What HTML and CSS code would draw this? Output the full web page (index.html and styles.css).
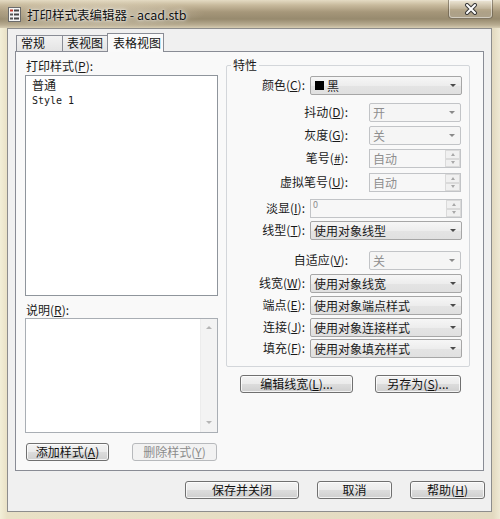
FILE: index.html
```html
<!DOCTYPE html>
<html lang="zh">
<head>
<meta charset="utf-8">
<title>打印样式表编辑器 - acad.stb</title>
<link rel="stylesheet" href="styles.css">
</head>
<body>
<div class="window">
  <div class="titlebar">
    <svg class="app-icon" width="13" height="15" viewBox="0 0 13 15">
      <rect x="0.5" y="0.5" width="12" height="14" fill="#f4f4f4" stroke="#6b6b6b"/>
      <rect x="2" y="2.5" width="3" height="2" fill="#c0392b"/>
      <rect x="6" y="2.5" width="5" height="2" fill="#444"/>
      <rect x="2" y="6.5" width="3" height="2" fill="#555"/>
      <rect x="6" y="6.5" width="5" height="2" fill="#444"/>
      <rect x="2" y="10.5" width="3" height="2" fill="#555"/>
      <rect x="6" y="10.5" width="5" height="2" fill="#444"/>
    </svg>
    <span class="title">打印样式表编辑器 - acad.stb</span>
    <div class="close">
      <svg width="14" height="12" viewBox="0 0 14 12">
        <path d="M3 2 L11 10 M11 2 L3 10" stroke="#3a3a3a" stroke-width="4" stroke-linecap="round"/>
        <path d="M3 2 L11 10 M11 2 L3 10" stroke="#ffffff" stroke-width="2" stroke-linecap="round"/>
      </svg>
    </div>
  </div>

  <div class="client">
    <div class="tabs">
      <div class="tab t1">常规</div>
      <div class="tab t2">表视图</div>
      <div class="tab t3 active">表格视图</div>
    </div>

    <div class="panel">
      <div class="left">
        <div class="lbl">打印样式(<u>P</u>):</div>
        <div class="listbox">
          <div class="item">普通</div>
          <div class="item mono">Style 1</div>
        </div>
        <div class="lbl lbl-desc">说明(<u>R</u>):</div>
        <div class="memo">
          <div class="memo-scroll">
            <i class="sa-up"></i>
            <i class="sa-down"></i>
          </div>
        </div>
        <div class="left-btns">
          <div class="btn b-add">添加样式(<u>A</u>)</div>
          <div class="btn disabled b-del">删除样式(<u>Y</u>)</div>
        </div>
      </div>

      <div class="right">
        <div class="group">
          <span class="group-title">特性</span>
          <div class="props">
            <div class="prow wide">
              <span class="plabel">颜色(<u>C</u>):</span>
              <div class="combo"><span class="swatch"></span>黑<i class="arrow"></i></div>
            </div>
            <div class="prow narrow">
              <span class="plabel">抖动(<u>D</u>):</span>
              <div class="combo off">开<i class="arrow"></i></div>
            </div>
            <div class="prow narrow">
              <span class="plabel">灰度(<u>G</u>):</span>
              <div class="combo off">关<i class="arrow"></i></div>
            </div>
            <div class="prow narrow">
              <span class="plabel">笔号(<u>#</u>):</span>
              <div class="spin off"><span class="spin-text">自动</span><span class="spin-btns"><i class="su"></i><i class="sd"></i></span></div>
            </div>
            <div class="prow narrow">
              <span class="plabel">虚拟笔号(<u>U</u>):</span>
              <div class="spin off"><span class="spin-text">自动</span><span class="spin-btns"><i class="su"></i><i class="sd"></i></span></div>
            </div>
            <div class="prow wide">
              <span class="plabel">淡显(<u>I</u>):</span>
              <div class="spin off"><span class="spin-text zero">0</span><span class="spin-btns"><i class="su"></i><i class="sd"></i></span></div>
            </div>
            <div class="prow wide">
              <span class="plabel">线型(<u>T</u>):</span>
              <div class="combo">使用对象线型<i class="arrow"></i></div>
            </div>
            <div class="prow narrow">
              <span class="plabel">自适应(<u>V</u>):</span>
              <div class="combo off">关<i class="arrow"></i></div>
            </div>
            <div class="prow wide">
              <span class="plabel">线宽(<u>W</u>):</span>
              <div class="combo">使用对象线宽<i class="arrow"></i></div>
            </div>
            <div class="prow wide">
              <span class="plabel">端点(<u>E</u>):</span>
              <div class="combo">使用对象端点样式<i class="arrow"></i></div>
            </div>
            <div class="prow wide">
              <span class="plabel">连接(<u>J</u>):</span>
              <div class="combo">使用对象连接样式<i class="arrow"></i></div>
            </div>
            <div class="prow wide">
              <span class="plabel">填充(<u>F</u>):</span>
              <div class="combo">使用对象填充样式<i class="arrow"></i></div>
            </div>
          </div>
        </div>
        <div class="right-btns">
          <div class="btn b-lw">编辑线宽(<u>L</u>)...</div>
          <div class="btn b-save">另存为(<u>S</u>)...</div>
        </div>
      </div>
    </div>

    <div class="footer">
      <div class="btn b-close">保存并关闭</div>
      <div class="btn b-cancel">取消</div>
      <div class="btn b-help">帮助(<u>H</u>)</div>
    </div>
  </div>
</div>
</body>
</html>
```

FILE: styles.css
```css
* { box-sizing: border-box; }
html, body { margin: 0; padding: 0; }
body {
  width: 500px;
  height: 519px;
  overflow: hidden;
  background: #ece5cf;
  font-family: "Noto Sans CJK SC", "Noto Sans", sans-serif;
  font-size: 12px;
  color: #1a1a1a;
}
u { text-decoration: underline; text-underline-offset: 1px; }

.window {
  display: flex;
  flex-direction: column;
  height: 519px;
  background: linear-gradient(90deg, #f3efd8 0, #e9e1c6 7px, #e3dac1 493px, #efe9d4 500px);
}

/* ---------- title bar ---------- */
.titlebar {
  height: 28px;
  flex: none;
  display: flex;
  align-items: center;
  padding: 0 7px 0 8px;
  background:
    radial-gradient(ellipse 110px 14px at 95px 14px, rgba(232,224,204,0.7), rgba(232,224,204,0)),
    linear-gradient(180deg, #e4dbc3 0, #c8ba9d 5px, #a6977a 12px, #978a6e 19px, #b9ad92 25px, #d6ccb2 28px);
}
.app-icon { flex: none; }
.title {
  margin-left: 6px;
  font-size: 12.5px;
  color: #111;
  text-shadow: 0 0 5px rgba(255,255,255,0.9), 0 0 2px rgba(255,255,255,0.8);
  white-space: nowrap;
}
.close {
  margin-left: auto;
  align-self: flex-start;
  width: 45px;
  height: 19px;
  display: flex;
  align-items: center;
  justify-content: center;
  border: 1px solid rgba(80,70,52,0.55);
  border-top: none;
  border-radius: 0 0 4px 4px;
  background: linear-gradient(180deg, rgba(255,255,255,0.35), rgba(255,255,255,0.12) 50%, rgba(255,255,255,0.05) 51%, rgba(255,255,255,0.2));
  box-shadow: inset 0 0 0 1px rgba(255,255,255,0.45);
}

/* ---------- client area ---------- */
.client {
  flex: none;
  height: 484px;
  margin: 0 8px 0 7px;
  background: #f0f0f0;
  border: 1px solid #8d8d8d;
  padding: 4px 7px 0 7px;
  display: flex;
  flex-direction: column;
}

.tabs {
  height: 18px;
  display: flex;
  align-items: flex-end;
  padding-left: 1px;
  flex: none;
}
.tab {
  height: 16px;
  border: 1px solid #898c95;
  border-bottom: none;
  background: linear-gradient(180deg, #f2f2f2, #e4e4e4);
  font-size: 12px;
  line-height: 14px;
  padding-left: 4px;
  color: #111;
}
.t1 { width: 47px; }
.t2 { width: 47px; margin-left: -1px; }
.t3 { width: 57px; margin-left: -2px; }
.tab.active {
  height: 19px;
  margin-bottom: -1px;
  position: relative;
  z-index: 1;
  background: #fafafa;
  line-height: 17px;
  padding-left: 5px;
}

.panel {
  height: 420px;
  flex: none;
  border: 1px solid #898c95;
  background: #f9f9f9;
  display: flex;
  gap: 8px;
  padding: 0 12px 0 9px;
}

/* ---------- left column ---------- */
.left {
  width: 193px;
  display: flex;
  flex-direction: column;
  padding-top: 7px;
}
.lbl {
  line-height: 14px;
  height: 14px;
  margin-bottom: 2px;
  padding-left: 1px;
}
.lbl-desc { margin-top: 7px; margin-bottom: 1px; }
.listbox {
  height: 221px;
  background: #fff;
  border: 1px solid #8f959c;
  padding: 1px 0 0 6px;
}
.item { line-height: 16px; height: 16px; }
.mono {
  font-family: "DejaVu Sans Mono", "Liberation Mono", monospace;
  font-size: 10px;
}
.memo {
  height: 115px;
  background: #fff;
  border: 1px solid #a9aeb4;
  display: flex;
  justify-content: flex-end;
}
.memo-scroll {
  width: 17px;
  background: #f3f3f3;
  border-left: 1px solid #ececec;
  display: flex;
  flex-direction: column;
  justify-content: space-between;
  align-items: center;
  padding: 7px 0 8px;
}
.sa-up, .sa-down {
  width: 0; height: 0;
  border-left: 3px solid transparent;
  border-right: 3px solid transparent;
}
.sa-up { border-bottom: 3px solid #b5b5b5; }
.sa-down { border-top: 3px solid #b5b5b5; }

.left-btns {
  display: flex;
  gap: 23px;
  margin-top: 10px;
  padding-left: 1px;
}

/* ---------- buttons ---------- */
.btn {
  height: 18px;
  border: 1px solid #707070;
  border-radius: 3px;
  background: linear-gradient(180deg, #f3f3f3 0%, #ebebeb 48%, #dcdcdc 52%, #cfcfcf 100%);
  box-shadow: inset 0 0 0 1px rgba(255,255,255,0.75);
  font-size: 12px;
  line-height: 16px;
  text-align: center;
  color: #111;
  white-space: nowrap;
}
.btn.disabled {
  border-color: #b7b9bc;
  background: #f2f2f2;
  color: #8b8b8b;
  box-shadow: none;
}
.b-add { width: 83px; }
.b-del { width: 85px; }
.b-lw { width: 113px; }
.b-save { width: 86px; }
.b-close { width: 114px; }
.b-cancel { width: 75px; }
.b-help { width: 75px; }

/* ---------- right column ---------- */
.right {
  width: 244px;
  display: flex;
  flex-direction: column;
  padding-top: 13px;
}
.group {
  position: relative;
  height: 302px;
  border: 1px solid #d3d6da;
  border-radius: 2px;
  padding-top: 10px;
}
.group-title {
  position: absolute;
  top: -8px;
  left: 4px;
  padding: 0 2px;
  background: #f9f9f9;
  line-height: 14px;
}
.props {
  display: grid;
  grid-template-rows: 27px 23px 23px 24px 26px 22px 30px 23px 22px 22px 21px 19px;
}
.prow {
  display: flex;
  align-items: flex-start;
}
.plabel {
  height: 19px;
  line-height: 18px;
  text-align: right;
  white-space: nowrap;
  flex: none;
}
.wide .plabel { width: 78px; margin-right: 5px; }
.wide .combo, .wide .spin { width: 152px; }
.narrow .plabel { width: 121px; margin-right: 21px; }
.narrow .combo, .narrow .spin { width: 92px; }

.combo {
  height: 19px;
  display: flex;
  align-items: center;
  padding-left: 3px;
  border: 1px solid #a6a6a6;
  border-radius: 2px;
  background: linear-gradient(180deg, #f6f6f6 0%, #ededed 50%, #e4e4e4 51%, #e0e0e0 100%);
  white-space: nowrap;
  line-height: 17px;
}
.combo.off {
  border-color: #c2c4c7;
  background: #f5f5f5;
  color: #8e8e8e;
}
.swatch {
  width: 9px;
  height: 9px;
  background: #000;
  margin: 0 3px 0 1px;
}
.arrow {
  margin-left: auto;
  margin-right: 5px;
  width: 0;
  height: 0;
  border-left: 3px solid transparent;
  border-right: 3px solid transparent;
  border-top: 3px solid #4a4a4a;
}
.combo.off .arrow { border-top-color: #8a8a8a; }

.spin {
  height: 19px;
  display: flex;
  border: 1px solid #c2c4c7;
  background: #f7f7f7;
}
.spin-text {
  flex: 1;
  padding-left: 3px;
  line-height: 17px;
  color: #8e8e8e;
}
.spin-text.zero {
  font-size: 9px;
  line-height: 10px;
  padding-left: 2px;
}
.spin-btns {
  width: 15px;
  display: flex;
  flex-direction: column;
}
.su, .sd {
  flex: 1;
  display: flex;
  align-items: center;
  justify-content: center;
  border: 1px solid #dadada;
  background: #f0f0f0;
}
.su::after, .sd::after {
  content: "";
  width: 0; height: 0;
  border-left: 2.5px solid transparent;
  border-right: 2.5px solid transparent;
}
.su::after { border-bottom: 3px solid #a8a8a8; }
.sd::after { border-top: 3px solid #a8a8a8; }

.right-btns {
  display: flex;
  gap: 22px;
  margin-top: 8px;
  padding-left: 14px;
}

/* ---------- footer ---------- */
.footer {
  display: flex;
  justify-content: flex-end;
  gap: 18px;
  margin-top: 10px;
  margin-right: -1px;
}
```
